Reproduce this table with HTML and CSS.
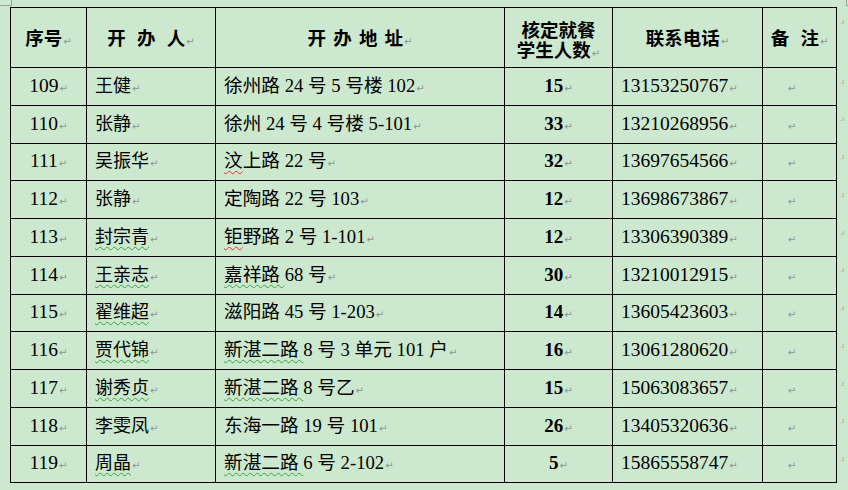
FILE: index.html
```html
<!DOCTYPE html>
<html lang="zh-CN">
<head>
<meta charset="utf-8">
<title>开办人登记表</title>
<link rel="stylesheet" href="styles.css">
</head>
<body>
<div class="sheet">
  <div class="marks"><div class="mark-l"></div><div class="mark-r"></div></div>
  <div class="wrap">
    <table class="tbl">
      <colgroup>
        <col class="c1"><col class="c2"><col class="c3"><col class="c4"><col class="c5"><col class="c6"><col class="c7">
      </colgroup>
      <tr class="head">
        <th>序号<span class="pm">↵</span></th>
        <th><span class="sp1">开 办 人</span><span class="pm">↵</span></th>
        <th><span class="sp2">开 办 地 址</span><span class="pm">↵</span></th>
        <th class="two"><div class="ln">核定就餐</div><div class="ln">学生人数<span class="pm">↵</span></div></th>
        <th>联系电话<span class="pm">↵</span></th>
        <th><span class="sp1">备 注</span><span class="pm">↵</span></th>
        <td class="end"><span class="em">.<i>ı</i></span></td>
      </tr>
      <tr>
        <td class="num">109<span class="pm">↵</span></td>
        <td class="name">王健<span class="pm">↵</span></td>
        <td class="addr">徐州路 24 号 5 号楼 102<span class="pm">↵</span></td>
        <td class="cnt">15<span class="pm">↵</span></td>
        <td class="tel">13153250767<span class="pm">↵</span></td>
        <td class="note"><span class="pm">↵</span></td>
        <td class="end"><span class="em">.<i>ı</i></span></td>
      </tr>
      <tr>
        <td class="num">110<span class="pm">↵</span></td>
        <td class="name">张静<span class="pm">↵</span></td>
        <td class="addr">徐州 24 号 4 号楼 5-101<span class="pm">↵</span></td>
        <td class="cnt">33<span class="pm">↵</span></td>
        <td class="tel">13210268956<span class="pm">↵</span></td>
        <td class="note"><span class="pm">↵</span></td>
        <td class="end"><span class="em">.<i>ı</i></span></td>
      </tr>
      <tr>
        <td class="num">111<span class="pm">↵</span></td>
        <td class="name">吴振华<span class="pm">↵</span></td>
        <td class="addr"><span class="red">汶</span>上路 22 号<span class="pm">↵</span></td>
        <td class="cnt">32<span class="pm">↵</span></td>
        <td class="tel">13697654566<span class="pm">↵</span></td>
        <td class="note"><span class="pm">↵</span></td>
        <td class="end"><span class="em">.<i>ı</i></span></td>
      </tr>
      <tr>
        <td class="num">112<span class="pm">↵</span></td>
        <td class="name">张静<span class="pm">↵</span></td>
        <td class="addr">定陶路 22 号 103<span class="pm">↵</span></td>
        <td class="cnt">12<span class="pm">↵</span></td>
        <td class="tel">13698673867<span class="pm">↵</span></td>
        <td class="note"><span class="pm">↵</span></td>
        <td class="end"><span class="em">.<i>ı</i></span></td>
      </tr>
      <tr>
        <td class="num">113<span class="pm">↵</span></td>
        <td class="name"><span class="grn">封宗青</span><span class="pm">↵</span></td>
        <td class="addr"><span class="red">钜</span>野路 2 号 1-101<span class="pm">↵</span></td>
        <td class="cnt">12<span class="pm">↵</span></td>
        <td class="tel">13306390389<span class="pm">↵</span></td>
        <td class="note"><span class="pm">↵</span></td>
        <td class="end"><span class="em">.<i>ı</i></span></td>
      </tr>
      <tr>
        <td class="num">114<span class="pm">↵</span></td>
        <td class="name"><span class="grn">王亲志</span><span class="pm">↵</span></td>
        <td class="addr"><span class="grn">嘉祥路 </span>68 号<span class="pm">↵</span></td>
        <td class="cnt">30<span class="pm">↵</span></td>
        <td class="tel">13210012915<span class="pm">↵</span></td>
        <td class="note"><span class="pm">↵</span></td>
        <td class="end"><span class="em">.<i>ı</i></span></td>
      </tr>
      <tr>
        <td class="num">115<span class="pm">↵</span></td>
        <td class="name"><span class="grn">翟维超</span><span class="pm">↵</span></td>
        <td class="addr">滋阳路 45 号 1-203<span class="pm">↵</span></td>
        <td class="cnt">14<span class="pm">↵</span></td>
        <td class="tel">13605423603<span class="pm">↵</span></td>
        <td class="note"><span class="pm">↵</span></td>
        <td class="end"><span class="em">.<i>ı</i></span></td>
      </tr>
      <tr>
        <td class="num">116<span class="pm">↵</span></td>
        <td class="name"><span class="grn">贾代锦</span><span class="pm">↵</span></td>
        <td class="addr"><span class="grn">新湛二路 </span>8 号 3 单元 101 户<span class="pm">↵</span></td>
        <td class="cnt">16<span class="pm">↵</span></td>
        <td class="tel">13061280620<span class="pm">↵</span></td>
        <td class="note"><span class="pm">↵</span></td>
        <td class="end"><span class="em">.<i>ı</i></span></td>
      </tr>
      <tr>
        <td class="num">117<span class="pm">↵</span></td>
        <td class="name"><span class="grn">谢秀贞</span><span class="pm">↵</span></td>
        <td class="addr"><span class="grn">新湛二路 </span>8 号乙<span class="pm">↵</span></td>
        <td class="cnt">15<span class="pm">↵</span></td>
        <td class="tel">15063083657<span class="pm">↵</span></td>
        <td class="note"><span class="pm">↵</span></td>
        <td class="end"><span class="em">.<i>ı</i></span></td>
      </tr>
      <tr>
        <td class="num">118<span class="pm">↵</span></td>
        <td class="name">李雯凤<span class="pm">↵</span></td>
        <td class="addr">东海一路 19 号 101<span class="pm">↵</span></td>
        <td class="cnt">26<span class="pm">↵</span></td>
        <td class="tel">13405320636<span class="pm">↵</span></td>
        <td class="note"><span class="pm">↵</span></td>
        <td class="end"><span class="em">.<i>ı</i></span></td>
      </tr>
      <tr>
        <td class="num">119<span class="pm">↵</span></td>
        <td class="name"><span class="grn">周晶</span><span class="pm">↵</span></td>
        <td class="addr"><span class="grn">新湛二路 </span>6 号 2-102<span class="pm">↵</span></td>
        <td class="cnt">5<span class="pm">↵</span></td>
        <td class="tel">15865558747<span class="pm">↵</span></td>
        <td class="note"><span class="pm">↵</span></td>
        <td class="end"><span class="em">.<i>ı</i></span></td>
      </tr>
    </table>
  </div>
</div>
</body>
</html>
```

FILE: styles.css
```css
html, body {
  margin: 0;
  padding: 0;
  background: #cce8cf;
}
body {
  font-family: "Liberation Serif", "Noto Sans CJK SC", serif;
  font-size: 18.67px;
  color: #000;
  width: 848px;
  height: 490px;
  overflow: hidden;
}
.sheet {
  width: 848px;
}
.marks {
  height: 6px;
  display: flex;
  justify-content: space-between;
}
.mark-l {
  width: 12px;
  height: 6px;
  border-right: 1px solid #9aa59b;
  border-bottom: 1px solid #9aa59b;
  box-sizing: border-box;
}
.mark-r {
  width: 2px;
  height: 6px;
  border-left: 1px solid #9aa59b;
  border-bottom: 1px solid #9aa59b;
  box-sizing: border-box;
}
.wrap {
  padding: 1px 0 0 10px;
}
.tbl {
  border-collapse: collapse;
  table-layout: fixed;
  width: 836px;
}
.c1 { width: 76px; }
.c2 { width: 129px; }
.c3 { width: 289px; }
.c4 { width: 108px; }
.c5 { width: 150px; }
.c6 { width: 74px; }
.c7 { width: 10px; }
.tbl th,
.tbl td {
  border: 1px solid #000;
  padding: 2px 8px 0;
  vertical-align: middle;
  white-space: nowrap;
  line-height: 20px;
}
.tbl th {
  font-weight: bold;
  text-align: center;
  font-family: "Noto Sans CJK SC", sans-serif;
  font-size: 18.5px;
  padding: 4px 4px 0;
}
.tbl tr {
  height: 37.75px;
}
.tbl tr.head {
  height: 60px;
}
.ln {
  height: 19.5px;
  line-height: 19.5px;
  overflow: visible;
}
.sp1 { word-spacing: 7px; }
.sp2 { word-spacing: 3px; }
.num { text-align: center; font-size: 19.5px; }
.name { text-align: left; font-size: 18px; }
.addr { text-align: left; font-size: 18.67px; }
.cnt { text-align: center; font-weight: bold; font-size: 19px; }
.tel { text-align: left; font-size: 19.5px; }
.tbl td.note { text-align: center; padding-right: 24px; }
.tbl td.end {
  border: none;
  padding: 0 0 0 3px;
  vertical-align: top;
  line-height: 8px;
}
.em {
  display: inline-block;
  margin-top: 10px;
  font-family: "DejaVu Sans", sans-serif;
  font-size: 7px;
  color: #8c948d;
}
.em i { font-style: normal; }
.pm {
  font-family: "DejaVu Sans", sans-serif;
  font-size: 10px;
  font-weight: normal;
  color: #8d938e;
  margin-left: 1px;
}
.grn {
  text-decoration: underline wavy #3f9f3f;
  text-decoration-thickness: 1px;
  text-underline-offset: 3px;
}
.red {
  text-decoration: underline wavy #e0302a;
  text-decoration-thickness: 1px;
  text-underline-offset: 3px;
}
```
